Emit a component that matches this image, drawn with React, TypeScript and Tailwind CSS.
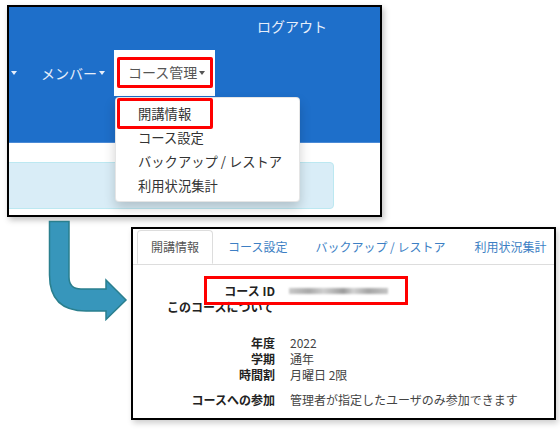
import React from "react";

const jp = { fontFamily: '"Noto Sans CJK JP", "Noto Sans", sans-serif' };

const Caret = ({ color }: { color: string }) => (
  <span
    className={`inline-block w-0 h-0 border-x-[3px] border-x-transparent border-t-[4px] ${color} ml-[2px]`}
  />
);

const TopPanel = () => (
  <div className="relative ml-[7px] mt-[5px] w-[375px] h-[212px] border-2 border-black bg-white overflow-hidden shadow-[2px_3px_6px_rgba(0,0,0,0.25)]">
    <div className="h-[136px] bg-[#1e6fca] border-b border-[#4a8ad6]">
      <div className="h-[38px] flex items-center pl-[248px] text-[14px] text-[#e6eefa]">ログアウト</div>
      <nav className="mt-[5px] h-[46px] flex text-[14px] text-[#e6eefa]">
        <span className="w-[32px] flex items-center">
          <Caret color="border-t-[#e6eefa]" />
        </span>
        <span className="w-[73px] flex items-center">
          メンバー
          <Caret color="border-t-[#e6eefa]" />
        </span>
        <div className="w-[101px] bg-white pt-[7px] pl-[3px] pr-[2px] pb-[8px]">
          <div className="h-full border-[3px] border-[#ff0000] rounded-[2px] flex items-center pl-[8px] text-[#555]">
            コース管理
            <Caret color="border-t-[#555]" />
          </div>
        </div>
      </nav>
    </div>
    <div className="mt-[19px] -ml-[10px] w-[335px] h-[47px] bg-[#d9edf7] border border-[#bce8f1] rounded-[4px]" />

    <ul className="absolute left-[106px] top-[90px] w-[185px] h-[105px] pt-[4px] bg-white rounded-[4px] border border-black/10 shadow-[0_6px_12px_rgba(0,0,0,0.18)] text-[13.3px] text-[#333]">
      <li className="relative h-[24px] leading-[24px] pl-[22px]">
        開講情報
        <span className="absolute left-[1px] -top-[4px] w-[96px] h-[31px] border-[3px] border-[#ff0000] rounded-[2px]" />
      </li>
      <li className="h-[24px] leading-[24px] pl-[22px]">コース設定</li>
      <li className="h-[24px] leading-[24px] pl-[22px]">バックアップ / レストア</li>
      <li className="h-[24px] leading-[24px] pl-[22px]">利用状況集計</li>
    </ul>
  </div>
);

const rows = [
  { label: "年度", value: "2022" },
  { label: "学期", value: "通年" },
  { label: "時間割", value: "月曜日 2限" },
];

const BottomPanel = () => (
  <div className="relative mt-[10px] ml-[131px] w-[425px] h-[193px] border-2 border-black bg-white overflow-hidden shadow-[2px_3px_6px_rgba(0,0,0,0.2)]">
    <div className="flex pl-[4px] pt-[1px] border-b border-[#dddddd] text-[12px] whitespace-nowrap">
      <span className="shrink-0 h-[34px] -mb-px px-[13px] flex items-center bg-white border border-[#dddddd] border-b-white rounded-t-[4px] text-[#555]">
        開講情報
      </span>
      <span className="shrink-0 h-[34px] px-[14px] ml-[1px] flex items-center text-[#3d7fc4]">コース設定</span>
      <span className="shrink-0 h-[34px] px-[14px] flex items-center text-[#3d7fc4]">バックアップ / レストア</span>
      <span className="shrink-0 h-[34px] px-[15px] flex items-center text-[#3d7fc4]">利用状況集計</span>
    </div>

    <div className="mt-[18px] grid grid-cols-[142px_1fr] gap-x-[14px] text-[12px] leading-[16px]">
      <span className="text-right font-bold text-[#222]">コース ID</span>
      <span className="flex items-center">
        <span className="block w-[99px] h-[6px] blur-[1.2px] bg-[linear-gradient(90deg,#c9c9c9,#a9a9a9_20%,#cfcfcf_35%,#9c9c9c_55%,#d2d2d2_65%,#a5a5a5_80%,#c4c4c4)]" />
      </span>
    </div>
    <div className="pl-[34px] text-[12px] leading-[16px] font-bold text-[#222]">このコースについて</div>

    <div className="mt-[20px] grid grid-cols-[142px_1fr] gap-x-[15px] text-[12px] leading-[16px]">
      {rows.map((r) => (
        <React.Fragment key={r.label}>
          <span className="text-right font-bold text-[#222]">{r.label}</span>
          <span className="text-[#444]">{r.value}</span>
        </React.Fragment>
      ))}
    </div>
    <div className="mt-[9px] grid grid-cols-[142px_1fr] gap-x-[15px] text-[12px] leading-[16px]">
      <span className="text-right font-bold text-[#222]">コースへの参加</span>
      <span className="text-[#444]">管理者が指定したユーザのみ参加できます</span>
    </div>

    <span className="absolute left-[71px] top-[47px] w-[204px] h-[29px] border-[3px] border-[#ff0000]" />
  </div>
);

const Arrow = () => (
  <svg className="absolute left-0 top-0" width="140" height="330" viewBox="0 0 140 330">
    <path
      d="M49.5,221.5 H69 V277 Q69,289 81,289 H106 V280 L126,300 L106,319.5 V311 H86 Q49.5,311 49.5,275 Z"
      fill="#3796bb"
      stroke="#2a7f8e"
      strokeWidth="1.5"
      strokeLinejoin="miter"
    />
  </svg>
);

export default function App() {
  return (
    <div className="relative w-[560px] h-[429px] bg-white overflow-hidden" style={jp}>
      <TopPanel />
      <BottomPanel />
      <Arrow />
    </div>
  );
}
